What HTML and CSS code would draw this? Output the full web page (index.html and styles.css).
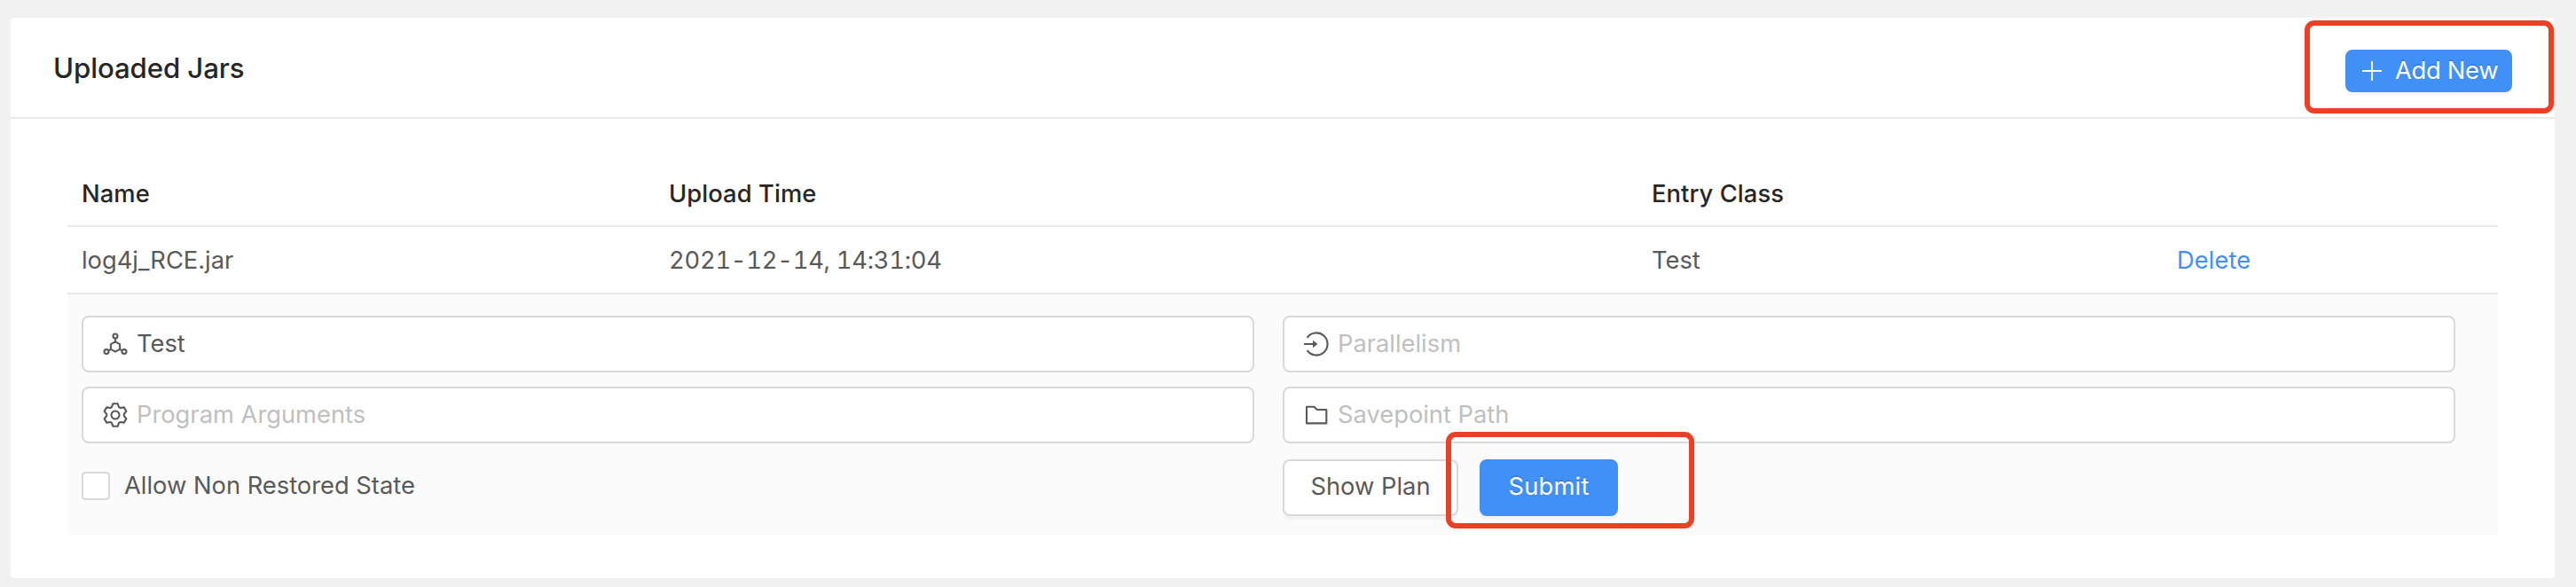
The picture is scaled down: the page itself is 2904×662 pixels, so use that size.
FILE: index.html
```html
<!DOCTYPE html>
<html lang="en">
<head>
<meta charset="utf-8">
<title>Uploaded Jars</title>
<link rel="stylesheet" href="styles.css">
</head>
<body>
<main class="card">
  <header class="card-head">
    <h1 class="title">Uploaded Jars</h1>
    <button class="btn primary small">
      <svg class="plus" viewBox="0 0 22 22"><path d="M11 0v22M0 11h22"/></svg>
      <span>Add New</span>
    </button>
  </header>
  <section class="table">
    <div class="row head">
      <span>Name</span><span>Upload Time</span><span>Entry Class</span><span></span>
    </div>
    <div class="row">
      <span>log4j_RCE.jar</span><span class="date">2021-12-14, 14:31:04</span><span>Test</span><span><a>Delete</a></span>
    </div>
    <div class="expanded">
      <div class="field">
        <svg class="icon" viewBox="0 0 28 28"><path d="M14 11.300l5.100 2.900v5.700L14 22.700l-5.100-2.800v-5.700zM14 11.300V7.500M8.900 19.900L6.200 21.400M19.100 19.900l2.700 1.500"/><circle cx="14" cy="5" r="2.500"/><circle cx="4" cy="22.600" r="2.500"/><circle cx="24" cy="22.600" r="2.500"/></svg>
        <span>Test</span>
      </div>
      <div class="field">
        <svg class="icon" viewBox="0 0 28 28"><path d="M3.600 6.800A12.600 12.600 0 1 1 3.600 21.200M0 14h11"/><path class="solid" d="M10 9.800v8.400l5.300-4.200z"/></svg>
        <span class="hint">Parallelism</span>
      </div>
      <div class="field">
        <svg class="icon" viewBox="-14 -14 28 28"><path d="M-4-9L-2.600-12.800H2.600L4-9L5.790-7.960L9.780-8.650L12.380-4.150L9.790-1.040V1.040L12.380 4.150L9.780 8.650L5.790 7.960L4 9L2.600 12.800H-2.600L-4 9L-5.790 7.960L-9.780 8.650L-12.380 4.150L-9.790 1.040V-1.040L-12.380-4.150L-9.780-8.650L-5.790-7.960Z"/><circle r="4.500"/></svg>
        <span class="hint">Program Arguments</span>
      </div>
      <div class="field">
        <svg class="icon" viewBox="0 0 28 28"><path d="M3 4.700h8.400l3.400 3.300H25.300v15.400H3z"/></svg>
        <span class="hint">Savepoint Path</span>
      </div>
      <label class="check"><span class="box"></span><span>Allow Non Restored State</span></label>
      <div class="actions">
        <button class="btn plain">Show Plan</button>
        <button class="btn primary submit">Submit</button>
      </div>
    </div>
  </section>
</main>
<div class="mark mark-add"></div>
<div class="mark mark-submit"></div>
</body>
</html>
```
FILE: styles.css
```css
* { box-sizing: border-box; }
body { margin: 0; height: 662px; padding: 20px 24px 10px 12px; background: #f1f1f1; font: 27.3px/42px Inter, "Liberation Sans", sans-serif; color: #595959; position: relative; overflow: hidden; white-space: nowrap; }
.card { height: 632px; background: #fff; border-radius: 4px; }
.card-head { height: 114px; border-bottom: 2px solid #e8e8e8; padding: 0 48px; display: flex; justify-content: space-between; align-items: center; }
.title { margin: 0; padding-top: 2px; font-size: 31.2px; font-weight: 500; letter-spacing: -.1px; color: #262626; }
.btn { font: inherit; height: 64px; border-radius: 8px; border: 2px solid #d9d9d9; padding: 0 0 3px; display: flex; align-items: center; justify-content: center; box-shadow: 0 4px 0 rgba(0,0,0,.03); }
.plain { width: 198px; background: #fff; color: #595959; }
.primary { width: 156px; background: #4190f7; border-color: #4190f7; color: #fff; text-shadow: 0 -2px 0 rgba(0,0,0,.12); }
.submit { letter-spacing: .2px; }
.small { width: 188px; height: 48px; margin-top: 8px; padding: 0 0 0 17px; gap: 15px; justify-content: flex-start; letter-spacing: -.3px; }
.plus { width: 22px; height: 22px; flex: none; fill: none; stroke: #fff; stroke-width: 2; }
.table { padding: 48px 64px; }
.row { height: 76px; padding: 1px 16px 0; display: grid; grid-template-columns: 662px 1108px 592px 1fr; align-items: center; border-bottom: 2px solid #e8e8e8; }
.head { height: 74px; color: #262626; font-weight: 500; letter-spacing: .1px; }
.date { font-feature-settings: "tnum"; letter-spacing: -.24px; }
a { color: #4190f7; letter-spacing: .1px; }
.expanded { height: 272px; background: #fbfbfb; padding: 24px 48px 0 16px; display: grid; grid-template-columns: 1fr 1fr; grid-template-rows: 64px 64px 64px; gap: 16px 32px; }
.field { background: #fff; border: 2px solid #d9d9d9; border-radius: 8px; padding: 0 22px; display: flex; align-items: center; gap: 10px; }
.icon { width: 28px; height: 28px; flex: none; fill: none; stroke: #595959; stroke-width: 2.1; stroke-linejoin: round; overflow: visible; }
.solid { fill: #595959; stroke: none; }
.hint { color: #bfbfbf; }
.check { display: flex; align-items: center; gap: 16px; }
.box { width: 32px; height: 32px; border: 2px solid #d9d9d9; border-radius: 4px; background: #fff; }
.actions { display: flex; gap: 24px; padding-top: 2px; }
.mark { position: absolute; border: 6px solid #ec4026; border-radius: 11px; }
.mark-add { left: 2598px; top: 23px; width: 281px; height: 105px; }
.mark-submit { left: 1630px; top: 487px; width: 280px; height: 109px; }
```
